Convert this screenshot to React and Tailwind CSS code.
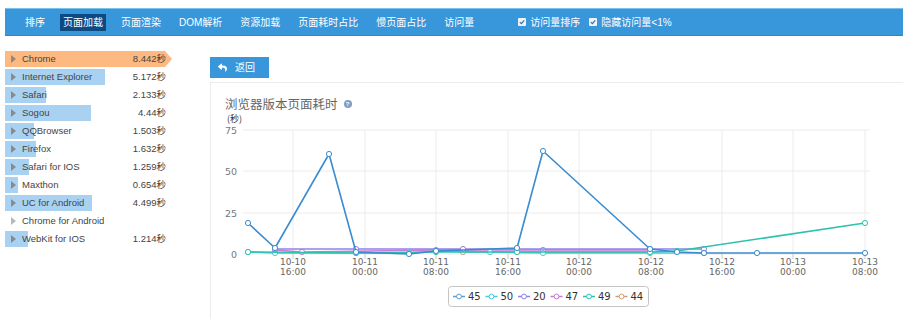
import React from "react";
import { FaReply } from "react-icons/fa";

const FONT = { fontFamily: '"Liberation Sans", "Noto Sans CJK SC", sans-serif' };

const navItems = ["排序", "页面加载", "页面渲染", "DOM解析", "资源加载", "页面耗时占比", "慢页面占比", "访问量"];

const rows = [
  { name: "Chrome", value: "8.442秒", w: 167, active: true },
  { name: "Internet Explorer", value: "5.172秒", w: 100 },
  { name: "Safari", value: "2.133秒", w: 41 },
  { name: "Sogou", value: "4.44秒", w: 86 },
  { name: "QQBrowser", value: "1.503秒", w: 29 },
  { name: "Firefox", value: "1.632秒", w: 31 },
  { name: "Safari for IOS", value: "1.259秒", w: 24 },
  { name: "Maxthon", value: "0.654秒", w: 13 },
  { name: "UC for Android", value: "4.499秒", w: 87 },
  { name: "Chrome for Android", value: "", w: 0, faint: true },
  { name: "WebKit for IOS", value: "1.214秒", w: 23 },
];

function Check() {
  return (
    <span className="inline-flex items-center justify-center w-[8px] h-[8px] bg-[#eef3f8] rounded-[1px] mr-[4px]">
      <svg width="6" height="6" viewBox="0 0 6 6">
        <path d="M0.8 3.1 L2.4 4.6 L5.2 1.3" stroke="#3b6ea0" strokeWidth="1.2" fill="none" />
      </svg>
    </span>
  );
}

const gridX = [293, 365, 436, 508, 579, 651, 722, 793, 865];
const labels = [
  ["10-10", "16:00"], ["10-11", "00:00"], ["10-11", "08:00"], ["10-11", "16:00"],
  ["10-12", "00:00"], ["10-12", "08:00"], ["10-12", "16:00"], ["10-13", "00:00"], ["10-13", "08:00"],
];
const yTicks = [[75, 130], [50, 171], [25, 213], [0, 254]];

const series = [
  { name: "44", color: "#c9a07a", pts: [[463, 252], [517, 252], [650, 252]] },
  { name: "47", color: "#c87ad6", pts: [[275, 250], [302, 252], [436, 250], [543, 250], [650, 250]] },
  { name: "50", color: "#4dc6df", pts: [[248, 252], [275, 253], [356, 253], [409, 253], [436, 251], [490, 252], [543, 253], [650, 253], [704, 253]] },
  { name: "20", color: "#8e83e6", pts: [[275, 249], [356, 249], [463, 249], [517, 249], [650, 249], [704, 249]] },
  { name: "49", color: "#2cc2ae", pts: [[248, 252], [356, 253], [436, 252], [517, 252], [650, 252], [677, 251], [865, 223]] },
  { name: "45", color: "#3a8bcf", pts: [[248, 223], [275, 248], [329, 154], [356, 252], [409, 254], [436, 251], [517, 248], [543, 151], [650, 249], [677, 252], [704, 253], [757, 253], [865, 253]] },
];

const legend = [
  { name: "45", color: "#5aa0d8" },
  { name: "50", color: "#4dc6df" },
  { name: "20", color: "#8e83e6" },
  { name: "47", color: "#c87ad6" },
  { name: "49", color: "#2cc2ae" },
  { name: "44", color: "#c9a07a" },
];

function Chart() {
  const ox = 211;
  const oy = 112;
  const axisFont = '"DejaVu Sans", "Liberation Sans", sans-serif';
  return (
    <svg width="692" height="207" className="block">
      <g transform={`translate(${-ox},${-oy})`}>
        {yTicks.map(([v, yy]) => (
          <g key={v}>
            <line x1="243" x2="870" y1={yy} y2={yy} stroke="#ececec" strokeWidth="1" />
            <text x="237" y={yy + 3.5} textAnchor="end" fontSize="9.5" fill="#777" fontFamily={axisFont}>{v}</text>
          </g>
        ))}
        <text x="227" y="122" fontSize="9" fill="#333" fontFamily='"Noto Sans CJK SC", sans-serif'>(秒)</text>
        {gridX.map((x, i) => (
          <g key={x}>
            <line x1={x} x2={x} y1="130" y2="254" stroke="#ececec" strokeWidth="1" />
            <line x1={x} x2={x} y1="254" y2="259" stroke="#c8c8c8" strokeWidth="1" />
            <text x={x} y="265" textAnchor="middle" fontSize="9" fill="#666" fontFamily={axisFont}>{labels[i][0]}</text>
            <text x={x} y="275" textAnchor="middle" fontSize="9" fill="#666" fontFamily={axisFont}>{labels[i][1]}</text>
          </g>
        ))}
        {series.map((s) => (
          <g key={s.name}>
            <polyline points={s.pts.map((p) => p.join(",")).join(" ")} fill="none" stroke={s.color} strokeWidth="1.6" strokeLinejoin="round" />
            {s.pts.map((p, i) => (
              <circle key={i} cx={p[0]} cy={p[1]} r="2.6" fill="#fff" stroke={s.color} strokeWidth="1" />
            ))}
          </g>
        ))}
        <rect x="448.5" y="286.5" width="200" height="20" rx="3" fill="#fff" stroke="#c4c4c4" strokeWidth="1" />
        {legend.map((l, i) => {
          const x = 453 + i * 32.5;
          return (
            <g key={l.name}>
              <line x1={x} x2={x + 12} y1="296.5" y2="296.5" stroke={l.color} strokeWidth="1.5" />
              <circle cx={x + 6} cy="296.5" r="2.4" fill="#fff" stroke={l.color} strokeWidth="1" />
              <text x={x + 15} y="300" fontSize="10" fill="#333" fontFamily={axisFont}>{l.name}</text>
            </g>
          );
        })}
      </g>
    </svg>
  );
}

export default function App() {
  return (
    <div className="w-[903px] h-[319px] bg-white overflow-hidden pt-[8px]" style={FONT}>
      <div className="ml-[5px] h-[28px] bg-[#3896db] border-t border-[#7cc0ee] border-b-[1px] border-b-[#2f86c8] flex items-center pl-[17px] text-white text-[10px]">
        <div className="flex items-center gap-[12px]">
          {navItems.map((n, i) => (
            <span
              key={n}
              className={`px-[3px] h-[17px] leading-[17px] ${i === 1 ? "bg-[#0d4a82]" : ""}`}
              style={{ fontFamily: '"Liberation Sans", "Noto Sans CJK SC", sans-serif' }}
            >
              {n}
            </span>
          ))}
        </div>
        <div className="flex items-center ml-[41px]">
          <Check />
          <span>访问量排序</span>
        </div>
        <div className="flex items-center ml-[9px]">
          <Check />
          <span>隐藏访问量&lt;1%</span>
        </div>
      </div>

      <div className="flex mt-[15px]">
        <div className="ml-[5px] w-[170px] shrink-0">
          {rows.map((r) => (
            <div key={r.name} className="relative h-[18px] flex items-center text-[9.5px] text-[#444]">
              {r.w > 0 && (
                <div
                  className={`absolute left-0 top-0 h-[16px] ${r.active ? "bg-[#fdb97f] [clip-path:polygon(0_0,calc(100%_-_7px)_0,100%_50%,calc(100%_-_7px)_100%,0_100%)]" : "bg-[#a9d2f2]"}`}
                  style={{ width: r.w }}
                />
              )}
              <div className="relative flex items-center w-full h-[16px] self-start">
                <svg width="5" height="8" viewBox="0 0 5 8" className="ml-[6px] shrink-0">
                  <path d="M0 0 L5 4 L0 8 Z" fill={r.faint ? "#b8b8b8" : "#8a8a8a"} />
                </svg>
                <span className="ml-[6px]">{r.name}</span>
                <span className="ml-auto mr-[9px]">{r.value}</span>
              </div>
            </div>
          ))}
        </div>

        <div className="ml-[35px] flex-1 pt-[6px]">
          <button className="flex items-center h-[21px] w-[59px] bg-[#3896db] text-white text-[10px] pl-[8px]" style={FONT}>
            <FaReply size={9} />
            <span className="ml-[8px]">返回</span>
          </button>
          <div className="mt-[4px] border-l border-t border-[#ececec] h-[240px]">
            <div className="pt-[9px] pl-[14px] h-[29px] flex items-center leading-[20px] text-[12.5px] text-[#666]" style={{ fontFamily: '"Noto Sans CJK SC", sans-serif' }}>
              <span className="mt-[4px]">浏览器版本页面耗时</span>
              <span className="mt-[4px] ml-[6px] inline-flex items-center justify-center w-[8px] h-[8px] rounded-full bg-[#7f9fc6] text-white text-[6px] leading-none font-bold" style={FONT}>?</span>
            </div>
            <Chart />
          </div>
        </div>
      </div>
    </div>
  );
}
